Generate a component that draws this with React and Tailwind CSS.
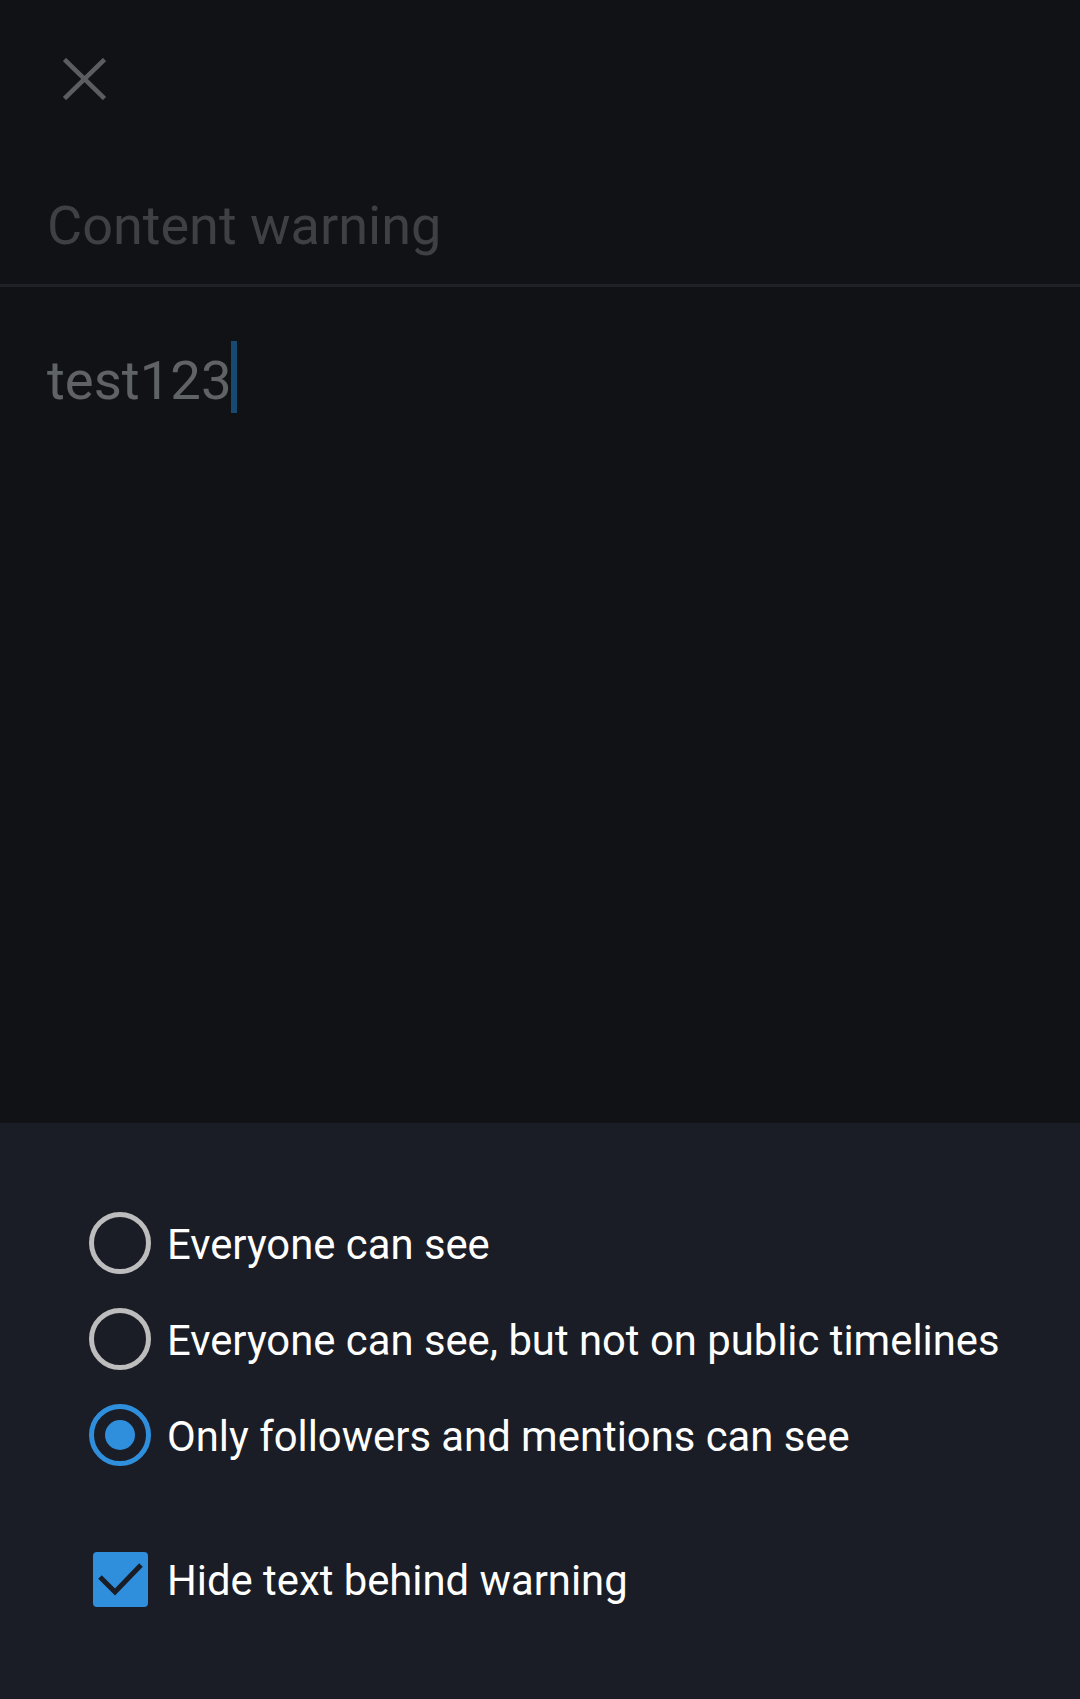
const options = [
  { id: 'public', label: 'Everyone can see' },
  { id: 'unlisted', label: 'Everyone can see, but not on public timelines' },
  { id: 'private', label: 'Only followers and mentions can see' },
]

function Radio({ checked }) {
  return (
    <div
      className={`w-[62px] h-[62px] rounded-full border-[5px] flex items-center justify-center ${
        checked ? 'border-[#2f8fdd]' : 'border-[#bdbdbd]'
      }`}
    >
      {checked && <div className="w-[30px] h-[30px] rounded-full bg-[#2f8fdd]" />}
    </div>
  )
}

function Checkbox() {
  return (
    <div className="w-[55px] h-[55px] rounded-[4px] bg-[#2f8fdd]">
      <svg width="55" height="55" viewBox="0 0 55 55">
        <path d="M7 25 L22 40 L48 13" fill="none" stroke="#1a1d25" strokeWidth="5" />
      </svg>
    </div>
  )
}

export default function App() {
  const visibility = 'private'

  return (
    <div className="w-[1080px] h-[1699px] flex flex-col bg-[#111216] font-['Roboto','Liberation_Sans',sans-serif]">
      <div className="flex-1 flex flex-col">
        <div className="pt-[58px] pl-[63px]">
          <svg width="43" height="42" viewBox="0 0 43 42">
            <path d="M1.5 1.5 L41.5 40.5 M41.5 1.5 L1.5 40.5" stroke="#5b5d60" strokeWidth="4.6" fill="none" />
          </svg>
        </div>

        <div className="mt-[94px] pl-[47px] pb-[26px] text-[54px] leading-[64px] text-[#3e4044]">
          Content warning
        </div>
        <div className="h-[3px] bg-[#1f2126]" />

        <div className="mt-[54px] pl-[47px] flex items-start">
          <div className="mt-[7px] text-[54.5px] leading-[64px] text-[#606366]">test123</div>
          <div className="-ml-[1px] w-[6px] h-[72px] bg-[#174a70]" />
        </div>
      </div>

      <div className="h-[576px] bg-[#1a1d25] pt-[72px] pl-[89px]">
        {options.map((opt) => (
          <div key={opt.id} className="h-[96px] flex items-center">
            <Radio checked={visibility === opt.id} />
            <span className="ml-[16px] pt-[4px] text-[41.8px] text-white leading-[96px]">{opt.label}</span>
          </div>
        ))}
        <div className="mt-[48px] h-[96px] flex items-center">
          <div className="w-[62px] flex justify-center">
            <Checkbox />
          </div>
          <span className="ml-[16px] pt-[4px] text-[41.8px] text-white leading-[96px]">Hide text behind warning</span>
        </div>
      </div>
    </div>
  )
}
